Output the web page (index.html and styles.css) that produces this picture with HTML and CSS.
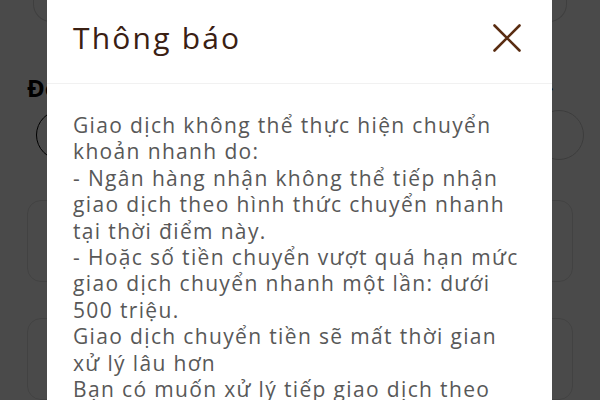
FILE: index.html
```html
<!DOCTYPE html>
<html lang="vi">
<head>
<meta charset="utf-8">
<link rel="stylesheet" href="styles.css">
</head>
<body>
<div class="page">
  <div class="top-card"></div>
  <div class="heading-row">
    <span class="heading">Đơn vị</span>
    <span class="chev">&#x276F;</span>
  </div>
  <div class="circle-row">
    <span class="circle"></span>
    <span class="circle faint"></span>
  </div>
  <div class="card"></div>
  <div class="card"></div>
</div>
<div class="overlay"></div>
<div class="modal">
  <div class="modal-head">
    <h1 class="title">Thông báo</h1>
    <svg class="close" width="28" height="28" viewBox="0 0 28 28"><path d="M1.5 1.5 L26.5 26.5 M26.5 1.5 L1.5 26.5" stroke="#5a2d12" stroke-width="2.6" stroke-linecap="round" fill="none"/></svg>
  </div>
  <div class="modal-body">
    <p class="msg">Giao dịch không thể thực hiện chuyển<br>khoản nhanh do:<br>- Ngân hàng nhận không thể tiếp nhận<br>giao dịch theo hình thức chuyển nhanh<br>tại thời điểm này.<br>- Hoặc số tiền chuyển vượt quá hạn mức<br>giao dịch chuyển nhanh một lần: dưới<br>500 triệu.<br>Giao dịch chuyển tiền sẽ mất thời gian<br>xử lý lâu hơn<br>Bạn có muốn xử lý tiếp giao dịch theo<br>hình thức chuyển thường không?</p>
  </div>
</div>
</body>
</html>
```
FILE: styles.css
```css
html, body {
  margin: 0;
  padding: 0;
  width: 600px;
  height: 400px;
  overflow: hidden;
  background: #ffffff;
  font-family: "Open Sans", "Noto Sans", sans-serif;
}
.page {
  position: relative;
  height: 400px;
  padding: 0 27px;
  display: flex;
  flex-direction: column;
}
.top-card {
  margin: -30px 6px 0 6px;
  height: 65px;
  border: 1.5px solid #d8d8d8;
  border-radius: 0 0 18px 18px;
  border-top: none;
}
.heading-row {
  margin-top: 54px;
  display: flex;
  justify-content: space-between;
  align-items: center;
  height: 24px;
}
.heading {
  font-size: 24px;
  font-weight: 700;
  color: #000;
}
.chev {
  font-size: 14px;
  color: #000;
  margin-right: 18px;
}
.circle-row {
  margin-top: 10px;
  display: flex;
  justify-content: space-between;
  padding: 0 9px;
}
.circle {
  width: 48px;
  height: 48px;
  border: 1.5px solid #000;
  border-radius: 50%;
}
.circle.faint { border-color: #cfcfcf; margin-right: -20px; }
.card {
  margin-top: 40px;
  height: 102px;
  border: 1.5px solid #e2e2e2;
  border-radius: 14px;
}
.card + .card { margin-top: 36px; }
.overlay {
  position: absolute;
  inset: 0;
  background: rgba(0, 0, 0, 0.71);
}
.modal {
  position: absolute;
  left: 47px;
  top: -20px;
  width: 505px;
  height: 460px;
  background: #ffffff;
  border-radius: 12px;
}
.modal-head {
  height: 104px;
  box-sizing: border-box;
  padding: 12px 31px 0 26px;
  display: flex;
  align-items: center;
  justify-content: space-between;
  border-bottom: 1.5px solid #f1f1f1;
}
.title {
  margin: 0;
  font-size: 30px;
  font-weight: 400;
  color: #3a2013;
  letter-spacing: 2.2px;
}
.close { display: block; }
.modal-body {
  padding: 28px 26px 0 26px;
}
.msg {
  margin: 0;
  font-size: 21px;
  line-height: 26.4px;
  color: #585858;
  white-space: nowrap;
  letter-spacing: 1.35px;
}
```
